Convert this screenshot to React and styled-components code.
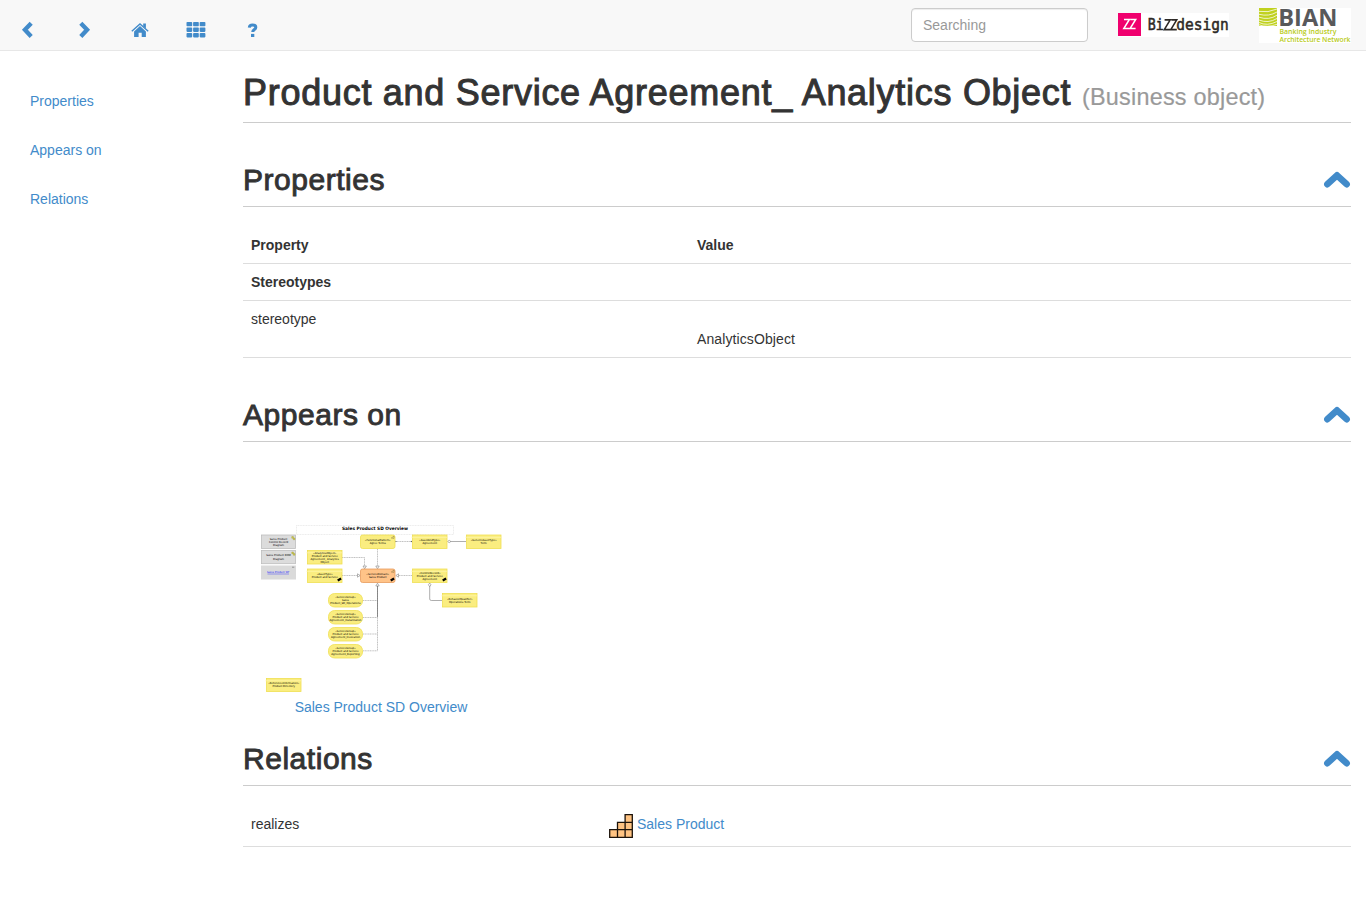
import React from 'react';
import styled, { createGlobalStyle } from 'styled-components';

const GlobalStyle = createGlobalStyle`
  * { box-sizing: border-box; }
  body {
    margin: 0;
    background: #fff;
    color: #333;
    font: 14px/20px "Liberation Sans", Arial, sans-serif;
  }
`;

const Navbar = styled.header`
  display: flex;
  align-items: flex-start;
  height: 51px;
  background: #f8f8f8;
  border-bottom: 1px solid #e7e7e7;
`;

const NavIcons = styled.nav`
  display: flex;
  flex: 1;
  padding-top: 20px;
`;

const NavButton = styled.a`
  display: flex;
  justify-content: center;
  width: 56px;
  color: #428bca;
  cursor: pointer;
  svg { display: block; width: 20px; height: 20px; }
`;

const Search = styled.input`
  width: 177px;
  height: 34px;
  margin: 8px 30px 0 0;
  padding: 6px 11px;
  border: 1px solid #ccc;
  border-radius: 4px;
  background: #fff;
  box-shadow: inset 0 1px 1px rgba(0, 0, 0, 0.075);
  font: 14px/20px "Liberation Sans", Arial, sans-serif;
  &::placeholder { color: #999; opacity: 1; }
`;

const BizzLogo = styled.svg`
  width: 111px;
  height: 24px;
  margin: 13px 30px 0 0;
`;

const BianLogo = styled.svg`
  width: 92px;
  height: 35px;
  margin: 8px 15px 0 0;
  overflow: visible;
`;

const Page = styled.div`
  display: flex;
`;

const Sidebar = styled.aside`
  display: flex;
  flex-direction: column;
  gap: 29px;
  width: 243px;
  padding: 40px 30px 0;
`;

const Link = styled.a`
  color: #428bca;
  text-decoration: none;
  cursor: pointer;
`;

const Content = styled.main`
  flex: 1;
  padding-right: 15px;
`;

const Title = styled.h1`
  height: 72px;
  margin: 0;
  padding-top: 22px;
  border-bottom: 1px solid #ccc;
  font-size: 36px;
  font-weight: 400;
  line-height: 40px;
  letter-spacing: 0.72px;
  white-space: nowrap;
  -webkit-text-stroke: 1px #333;
  small {
    color: #999;
    font-size: 23.4px;
    letter-spacing: 0.23px;
    -webkit-text-stroke: 0.2px #999;
  }
`;

const SectionHead = styled.div`
  display: flex;
  align-items: flex-start;
  justify-content: space-between;
  height: 44px;
  margin-top: ${(p) => p.$gap}px;
  border-bottom: 1px solid #ccc;
  svg { width: 28px; height: 20px; margin-top: 7px; }
`;

const SectionTitle = styled.h2`
  margin: 0;
  font-size: 30px;
  font-weight: 400;
  line-height: 33px;
  letter-spacing: 0.53px;
  -webkit-text-stroke: 0.9px #333;
`;

const Table = styled.div`
  margin-top: 20px;
`;

const Row = styled.div`
  display: grid;
  grid-template-columns: ${(p) => p.$columns};
  border-bottom: 1px solid #ddd;
  font-weight: ${(p) => (p.$bold ? 700 : 400)};
`;

const Cell = styled.div`
  padding: 8px;
  padding-top: ${(p) => (p.$lowered ? 28 : 8)}px;
  letter-spacing: ${(p) => (p.$lowered ? 0.1 : 0)}px;
`;

const ObjectCell = styled.div`
  display: flex;
  gap: 4px;
  padding: 8px;
  height: 40px;
  svg { width: 24px; height: 24px; }
`;

const Thumbnail = styled.figure`
  display: flex;
  flex-direction: column;
  align-items: center;
  width: 276px;
  height: 256px;
  margin: 0;
  padding-top: 73px;
  svg { flex: none; width: 256px; height: 182px; }
  figcaption { width: 100%; text-align: center; }
`;

const Chevron = () => (
  <svg viewBox="0 0 28 20">
    <path d="M4.4 14.2 14 5.3 23.6 14.2" fill="none" stroke="#428bca" strokeWidth="6.6" strokeLinecap="round" strokeLinejoin="round" />
  </svg>
);

const boxes = [
  [360.5, 535, 34.5, 13.5, 'y', ['«FunctionalPattern»', 'Agree Terms'], 2],
  [412.5, 535, 34.5, 13.5, 'y', ['«AssetAndType»', 'Agreement']],
  [466.5, 535, 34.5, 13.5, 'y', ['«GenericAssetType»', 'Term']],
  [307.5, 550.5, 34.5, 13.5, 'y', ['«AnalyticsObject»', 'Product and Service', 'Agreement_ Analytics', 'Object']],
  [307.5, 569, 34.5, 13.5, 'y', ['«AssetType»', 'Product and Service'], 0, true],
  [360.5, 569, 34.5, 13.5, 'o', ['«ServiceDomain»', 'Sales Product'], 2, true],
  [412.5, 569, 34.5, 13.5, 'y', ['«ControlRecord»', 'Product and Service', 'Agreement'], 0, true],
  [442.5, 593.5, 34.5, 13.5, 'y', ['«BehaviorQualifier»', 'Operations Term']],
  [328.5, 593.5, 34, 13.5, 'y', ['«ServiceGroup»', 'Sales', 'Product_SD_Operations'], 6],
  [328.5, 610.5, 34, 13.5, 'y', ['«ServiceGroup»', 'Product and Service', 'Agreement_Instantiation'], 6],
  [328.5, 627.5, 34, 13.5, 'y', ['«ServiceGroup»', 'Product and Service', 'Agreement_Invocation'], 6],
  [328.5, 644.5, 34, 13.5, 'y', ['«ServiceGroup»', 'Product and Service', 'Agreement_Reporting'], 6],
  [266.5, 678.5, 34.5, 13, 'y', ['«ReferenceInformation»', 'Product Directory']],
  [261.5, 535, 34, 13.5, 'g', ['Sales Product', 'Control Record', 'Diagram']],
  [261.5, 550.5, 34, 13.2, 'g', ['Sales Product BOM', 'Diagram']],
];
const fills = { y: ['#faed80', '#efdf52'], o: ['#ffc388', '#e79b5c'], g: ['#dcdcdc', '#bdbdbd'] };

const Box = ({ data: [x, y, w, h, kind, lines, radius = 0, mark] }) => (
  <g>
    <rect x={x} y={y} width={w} height={h} rx={radius} fill={fills[kind][0]} stroke={fills[kind][1]} strokeWidth="0.8" />
    {kind === 'y' && !radius && (
      <path d={`M${x - 1} ${y + 2.3}H${x + w}`} stroke="#fff5a8" strokeWidth="0.8" />
    )}
    {lines.map((line, i) => (
      <text key={line} x={x + w / 2} y={y + h / 2 + 0.9 + (i - (lines.length - 1) / 2) * 3.1} textAnchor="middle">{line}</text>
    ))}
    {kind === 'g' && <path d={`M${x + 30.3} ${y + 1.6}h1.6v1.5h1.5v1.6h-1.6v-1.5h-1.5z`} fill="#e3dc45" stroke="#8c8a35" strokeWidth="0.4" />}
    {mark && <path d={`M${x + w - 4.3} ${y + h - 2}l3.4-1.9`} fill="none" stroke="#000" strokeWidth="2.3" />}
    {radius === 2 && <path d={`M${x + w - 3.7} ${y + 3}l2.7-2v2.4z`} fill="none" stroke="#796b36" strokeWidth="0.45" />}
  </g>
);

const Diagram = () => (
  <svg viewBox="253 515 256 182" fontFamily="DejaVu Sans, sans-serif" fontSize="2.6" fill="#000" textRendering="geometricPrecision">
    <rect x="296.5" y="525.5" width="157" height="9" fill="#fff" stroke="#ddd" strokeWidth="0.6" strokeDasharray="1 .6" />
    <text x="375" y="530.2" textAnchor="middle" fontSize="4.5" fontWeight="700" textLength="66" lengthAdjust="spacingAndGlyphs">Sales Product SD Overview</text>
    <g fill="none" stroke="#999" strokeWidth="0.6">
      <path d="M395 541.5H412M342 557.5H364.5V567M377.5 549V567M342 575.5H358M412 575.5H397M363 600.5H377.5M363 617.5H377.5M363 634H377.5M363 650.8H377.5V584" strokeDasharray="1.2 .5" />
      <path d="M449 541.5H466M429.7 584V599Q429.7 600.5 431.5 600.5H442" stroke="#777" />
      <path d="M377.5 585V617" stroke="#666" strokeWidth="0.7" />
    </g>
    <g fill="#fff" stroke="#777" strokeWidth="0.55">
      <path d="M363 566h3.4l-1.7 2.8zM375.8 566h3.4l-1.7 2.8zM357.5 573.8v3.4l2.7-1.7zM398.5 573.8v3.4l-2.7-1.7zM375.8 586h3.4l-1.7-2.8z" />
      <path d="M447.5 541.5l1.7-1.2 1.7 1.2-1.7 1.2zM429.7 583l1.3 1.8-1.3 1.8-1.3-1.8z" />
    </g>
    <path d="M395.5 540.8l1.5.7-1.5.7zM412 540.8l-1.5.7 1.5.7z" fill="#555" />
    {boxes.map((box) => <Box key={`${box[0]}-${box[1]}`} data={box} />)}
    <rect x="261" y="565.5" width="35" height="14" fill="#dadada" />
    <text x="278.3" y="573.2" textAnchor="middle" fill="#22f">Sales Product WF</text>
    <path d="M267.5 574H289" stroke="#22f" strokeWidth="0.4" />
    <path d="M292 567.2h2.3" stroke="#777" strokeWidth="0.7" />
  </svg>
);

const sections = ['Properties', 'Appears on', 'Relations'];

const Section = ({ title, gap }) => (
  <SectionHead $gap={gap}>
    <SectionTitle>{title}</SectionTitle>
    <Chevron />
  </SectionHead>
);

export default function App() {
  return (
    <>
      <GlobalStyle />
      <Navbar>
        <NavIcons>
          <NavButton>
            <svg viewBox="0 0 20 20"><path d="M13.2 3.2 6.9 9.8l6.3 6.6" fill="none" stroke="currentColor" strokeWidth="4.3" /></svg>
          </NavButton>
          <NavButton>
            <svg viewBox="0 0 20 20"><path d="M6.8 3.2 13.1 9.8l-6.3 6.6" fill="none" stroke="currentColor" strokeWidth="4.3" /></svg>
          </NavButton>
          <NavButton>
            <svg viewBox="0 0 20 20">
              <path d="m1.8 11.2 8.2-7.3 8.2 7.3" fill="none" stroke="currentColor" strokeWidth="1.4" />
              <path d="M13.2 3.6h2.7v5l-2.7-2.4zM10 6.1l5.9 5.3V17h-4.2v-4.2H8.6V17H4.1v-5.6z" fill="currentColor" />
            </svg>
          </NavButton>
          <NavButton>
            <svg viewBox="0 0 20 20" fill="currentColor">
              {[2, 7.6, 13.1].flatMap((y) => [0.5, 7.1, 13.7].map((x) => (
                <rect key={`${x}-${y}`} x={x} y={y} width="5.7" height="4.3" rx="0.8" />
              )))}
            </svg>
          </NavButton>
          <NavButton>
            <svg viewBox="0 0 20 20">
              <path d="M7.3 7.6C7.4 6 8.5 5 10.6 5c2.1 0 3.2 1 3.2 2.4 0 2.2-3.1 2-3.1 4.7" fill="none" stroke="currentColor" strokeWidth="3" />
              <path d="M9 13.9h3.3V17H9z" fill="currentColor" />
            </svg>
          </NavButton>
        </NavIcons>
        <Search placeholder="Searching" />
        <BizzLogo viewBox="0 0 111 24">
          <path d="M0 0h111v24H0z" fill="#fff" />
          <path d="M0 0h23v23H0z" fill="#f0006e" />
          <path d="M6 6.5h5.4L5.8 15.6h5.7M12.3 6.5h5.4l-5.6 9.1h5.5" fill="none" stroke="#fff" strokeWidth="1.5" />
          <g fill="#2d2926" stroke="#2d2926" strokeWidth="0.5" fontFamily="DejaVu Sans Mono, monospace" fontSize="15">
            <text x="29.7" y="17.3" textLength="16" lengthAdjust="spacingAndGlyphs">Bi</text>
            <text x="58.3" y="17.3" textLength="52.5" lengthAdjust="spacingAndGlyphs">design</text>
          </g>
          <path d="M46.6 6.9h5.6l-5.9 9.7h6.2M53.3 6.9h5.4l-5.9 9.7h6" fill="none" stroke="#2d2926" strokeWidth="1.6" />
        </BizzLogo>
        <BianLogo viewBox="0 0 92 35">
          <path d="M0 0h92v35H0z" fill="#fff" />
          <path d="M0 0h18v18H0z" fill="#c0d11f" />
          <path d="M0 3.4Q9 5 18 1M0 6.3Q10 8.8 18 4M0 9.2Q10 12.5 18 7.2M0 12Q9 15.8 18 10.5M0 14.5Q8 18.5 18 13.5M0 16.8Q8 20 18 16.3" fill="none" stroke="#fff" strokeWidth="0.75" />
          <text x="19.3" y="17.5" fontFamily="Open Sans, sans-serif" fontSize="23.5" fontWeight="700" fill="#58595b" textLength="59" lengthAdjust="spacingAndGlyphs">BIAN</text>
          <g fill="#b8cb16" fontFamily="Open Sans, sans-serif" fontSize="6.8" fontWeight="600">
            <text x="20.5" y="26.3" textLength="57" lengthAdjust="spacingAndGlyphs">Banking Industry</text>
            <text x="20.5" y="33.6" textLength="71" lengthAdjust="spacingAndGlyphs">Architecture Network</text>
          </g>
        </BianLogo>
      </Navbar>
      <Page>
        <Sidebar>
          {sections.map((name) => <Link key={name}>{name}</Link>)}
        </Sidebar>
        <Content>
          <Title>Product and Service Agreement_ Analytics Object <small>(Business object)</small></Title>
          <Section title="Properties" gap={40} />
          <Table>
            <Row $columns="446px 1fr" $bold><Cell>Property</Cell><Cell>Value</Cell></Row>
            <Row $columns="446px 1fr" $bold><Cell>Stereotypes</Cell></Row>
            <Row $columns="446px 1fr"><Cell>stereotype</Cell><Cell $lowered>AnalyticsObject</Cell></Row>
          </Table>
          <Section title="Appears on" gap={40} />
          <Thumbnail>
            <Diagram />
            <figcaption><Link>Sales Product SD Overview</Link></figcaption>
          </Thumbnail>
          <Section title="Relations" gap={44} />
          <Table>
            <Row $columns="358px 1fr">
              <Cell>realizes</Cell>
              <ObjectCell>
                <svg viewBox="0 0 24 24">
                  <path d="M.7 23.3v-7.6h7.8V8.3h7.6V.7h7.2v22.6zM8.5 15.7h14.8M16.1 8.3h7.2M8.5 15.7v7.6M16.1 8.3v15" fill="#ffc382" stroke="#1c120a" strokeWidth="1.3" />
                </svg>
                <Link>Sales Product</Link>
              </ObjectCell>
            </Row>
          </Table>
        </Content>
      </Page>
    </>
  );
}
